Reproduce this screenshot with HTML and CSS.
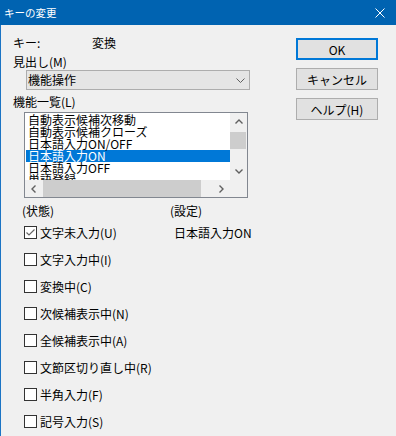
FILE: index.html
```html
<!DOCTYPE html>
<html lang="ja">

<head>
    <meta charset="UTF-8">
    <meta name="viewport" content="width=device-width, initial-scale=1.0">
    <title>キーの変更</title>
    <link rel="stylesheet" href="styles.css">
</head>

<body>
    <div class="titlebar">
        <span class="title">キーの変更</span>
        <svg class="close" width="10" height="10" viewBox="0 0 10 10">
            <path d="M0.5 0.5 L9.5 9.5 M9.5 0.5 L0.5 9.5" stroke="#fff" stroke-width="1" fill="none" />
        </svg>
    </div>
    <div class="client">
        <div class="main">
            <div class="key-row">
                <span class="key-label">キー:</span>
                <span>変換</span>
            </div>
            <div class="heading-label">見出し(M)</div>
            <div class="combo">
                <span>機能操作</span>
                <svg width="9" height="5" viewBox="0 0 9 5">
                    <path d="M0.5 0.5 L4.5 4.5 L8.5 0.5" stroke="#606060" fill="none" />
                </svg>
            </div>
            <div class="list-label">機能一覧(L)</div>
            <div class="listbox">
                <div class="items">
                    <div class="item">自動表示候補次移動</div>
                    <div class="item">自動表示候補クローズ</div>
                    <div class="item">日本語入力ON/OFF</div>
                    <div class="item selected">日本語入力ON</div>
                    <div class="item">日本語入力OFF</div>
                    <div class="item">単語登録</div>
                </div>
                <div class="vscroll">
                    <div class="sbtn">
                        <svg width="8" height="5" viewBox="0 0 8 5"><path d="M0.5 4.5 L4 1 L7.5 4.5" stroke="#606060" stroke-width="1.4" fill="none" /></svg>
                    </div>
                    <div class="track-v"><div class="thumb-v"></div></div>
                    <div class="sbtn">
                        <svg width="8" height="5" viewBox="0 0 8 5"><path d="M0.5 0.5 L4 4 L7.5 0.5" stroke="#606060" stroke-width="1.4" fill="none" /></svg>
                    </div>
                </div>
                <div class="hscroll">
                    <div class="sbtn">
                        <svg width="5" height="8" viewBox="0 0 5 8"><path d="M4.5 0.5 L1 4 L4.5 7.5" stroke="#606060" stroke-width="1.4" fill="none" /></svg>
                    </div>
                    <div class="track-h"><div class="thumb-h"></div></div>
                    <div class="sbtn">
                        <svg width="5" height="8" viewBox="0 0 5 8"><path d="M0.5 0.5 L4 4 L0.5 7.5" stroke="#606060" stroke-width="1.4" fill="none" /></svg>
                    </div>
                </div>
                <div class="corner"></div>
            </div>
            <div class="state">
                <div class="state-col">
                    <div>(状態)</div>
                    <div class="checks">
                        <label class="check"><span class="box"><svg width="11" height="11" viewBox="0 0 11 11"><path d="M1.5 5.5 L4 8 L9.5 2.5" stroke="#666" stroke-width="1.2" fill="none" /></svg></span>文字未入力(U)</label>
                        <label class="check"><span class="box"></span>文字入力中(I)</label>
                        <label class="check"><span class="box"></span>変換中(C)</label>
                        <label class="check"><span class="box"></span>次候補表示中(N)</label>
                        <label class="check"><span class="box"></span>全候補表示中(A)</label>
                        <label class="check"><span class="box"></span>文節区切り直し中(R)</label>
                        <label class="check"><span class="box"></span>半角入力(F)</label>
                        <label class="check"><span class="box"></span>記号入力(S)</label>
                    </div>
                </div>
                <div class="setting-col">
                    <div>(設定)</div>
                    <div class="setting-value">日本語入力ON</div>
                </div>
            </div>
        </div>
        <div class="side">
            <button class="default">OK</button>
            <button>キャンセル</button>
            <button>ヘルプ(H)</button>
        </div>
    </div>
</body>

</html>
```

FILE: styles.css
```css
body {
    margin: 0;
    font-family: "Noto Sans CJK JP", sans-serif;
    font-size: 12px;
    line-height: 12px;
    color: #000;
    background-color: #f0f0f0;
    overflow: hidden;
}

.titlebar {
    height: 25px;
    background-color: #0063b1;
    color: #fff;
    display: flex;
    align-items: center;
    justify-content: space-between;
    padding: 0 11px 0 4px;
}

.title {
    font-size: 10.5px;
}

.client {
    display: flex;
    height: 411px;
    border-left: 1px solid #1b74c4;
    overflow: hidden;
}

.main {
    flex: 1;
    padding: 12px 0 0 12px;
}

.key-row {
    display: flex;
}

.key-label {
    width: 79px;
}

.heading-label {
    margin-top: 7px;
}

.combo {
    box-sizing: border-box;
    margin: 2px 0 0 13px;
    width: 224px;
    height: 20px;
    padding: 0 4px 0 1px;
    display: flex;
    align-items: center;
    justify-content: space-between;
    background-color: #e5e5e5;
    border: 1px solid #adadad;
}

.list-label {
    margin-top: 6px;
}

.listbox {
    box-sizing: border-box;
    margin: 4px 0 0 11px;
    width: 224px;
    height: 86px;
    border: 1px solid #828790;
    display: grid;
    grid-template-columns: 1fr 17px;
    grid-template-rows: 67px 17px;
}

.items {
    background: #fff;
    padding: 1px 0 0 1px;
    overflow: hidden;
}

.item {
    height: 12px;
    padding-left: 2px;
    white-space: nowrap;
}

.item.selected {
    background-color: #0078d7;
    color: #fff;
}

.vscroll,
.hscroll {
    display: flex;
    background-color: #f0f0f0;
}

.vscroll {
    flex-direction: column;
}

.sbtn {
    width: 17px;
    height: 17px;
    flex: none;
    display: flex;
    align-items: center;
    justify-content: center;
}

.track-v {
    flex: 1;
    padding-top: 2px;
}

.thumb-v {
    margin-left: 0;
    width: 16px;
    height: 17px;
    background-color: #cdcdcd;
}

.track-h {
    flex: 1;
    padding-left: 1px;
}

.thumb-h {
    width: 158px;
    height: 17px;
    background-color: #cdcdcd;
}

.corner {
    background-color: #f0f0f0;
}

.state {
    display: flex;
    margin: 7px 0 0 9px;
}

.state-col {
    width: 148px;
}

.checks {
    margin-top: 9px;
}

.check {
    display: flex;
    align-items: center;
    height: 13px;
    margin-bottom: 14px;
    white-space: nowrap;
}

.box {
    box-sizing: border-box;
    width: 13px;
    height: 13px;
    margin: 0 3px 0 2px;
    border: 1px solid #333;
    background: #fff;
    display: flex;
    align-items: center;
    justify-content: center;
}

.setting-value {
    margin: 9px 0 0 4px;
    line-height: 13px;
}

.side {
    width: 82px;
    margin: 13px 18px 0 0;
    display: flex;
    flex-direction: column;
    gap: 8px;
}

button {
    box-sizing: border-box;
    height: 22px;
    padding: 0;
    font-family: inherit;
    font-size: 12px;
    color: #000;
    background-color: #e1e1e1;
    border: 1px solid #adadad;
}

button.default {
    border: 2px solid #0078d7;
}
```
